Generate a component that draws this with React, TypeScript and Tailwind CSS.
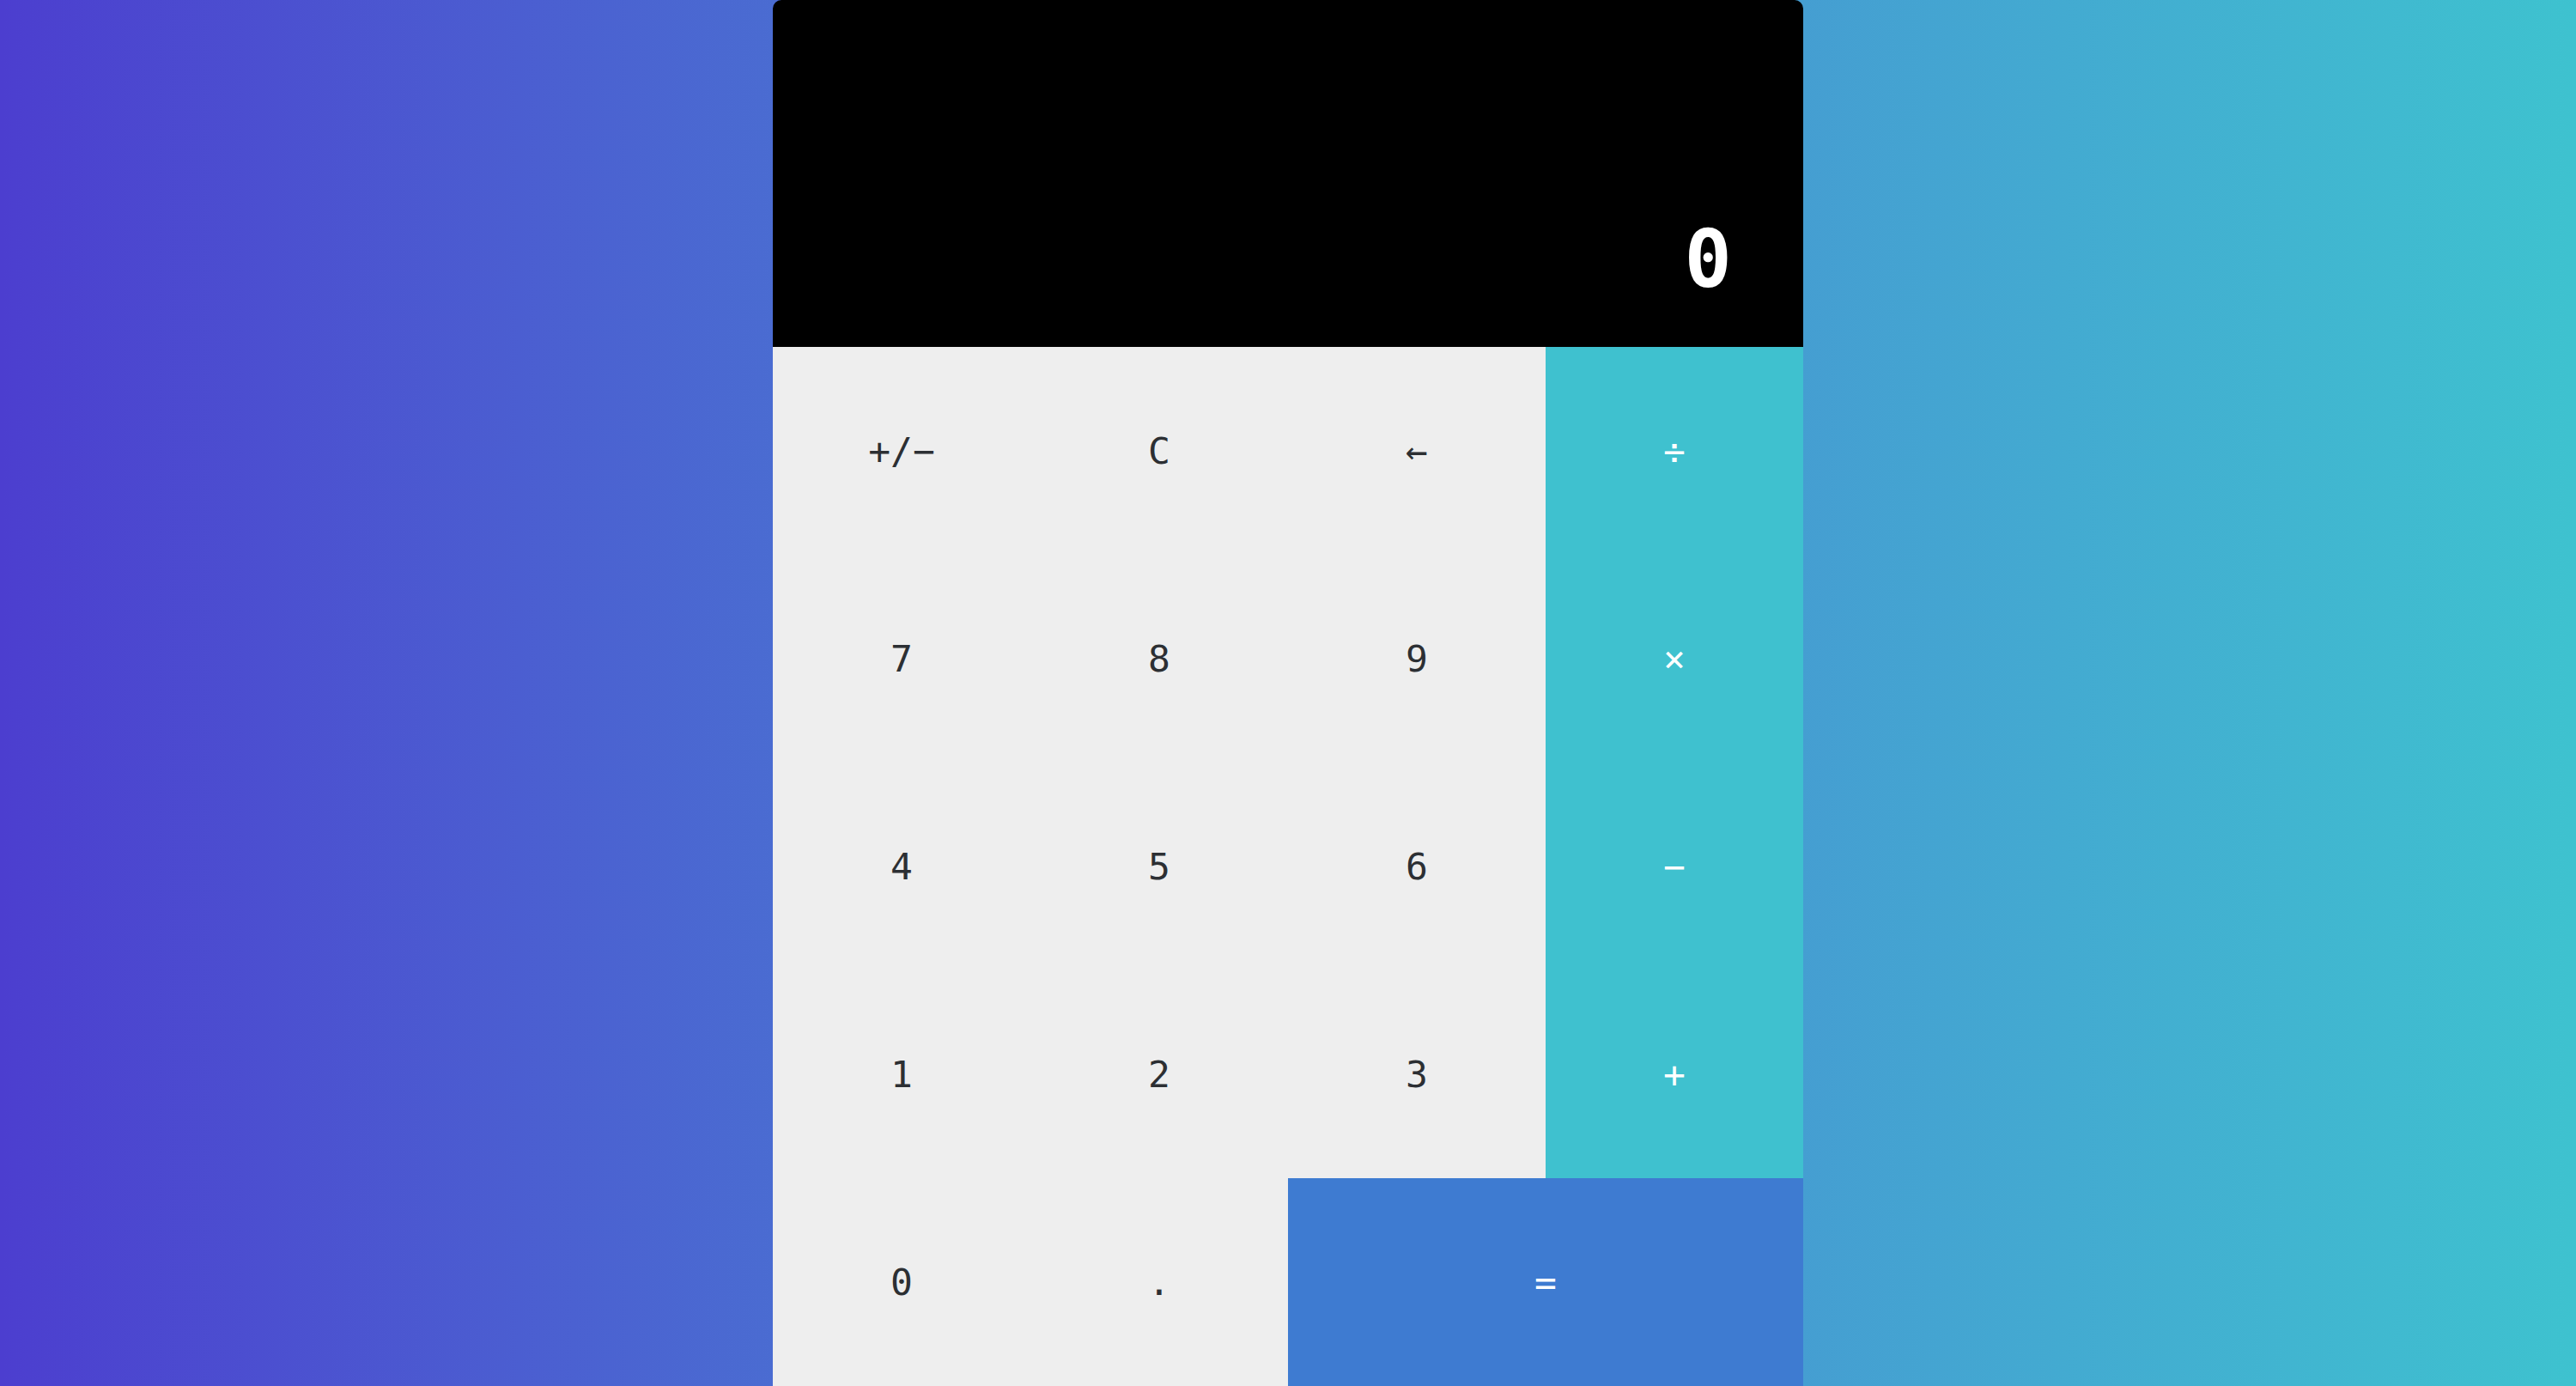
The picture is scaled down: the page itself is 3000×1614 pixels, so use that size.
import React from 'react'

type Key = {
  label: string
  kind: 'num' | 'op' | 'eq'
  wide?: boolean
}

const keys: Key[] = [
  { label: '+/−', kind: 'num' },
  { label: 'C', kind: 'num' },
  { label: '←', kind: 'num' },
  { label: '÷', kind: 'op' },
  { label: '7', kind: 'num' },
  { label: '8', kind: 'num' },
  { label: '9', kind: 'num' },
  { label: '×', kind: 'op' },
  { label: '4', kind: 'num' },
  { label: '5', kind: 'num' },
  { label: '6', kind: 'num' },
  { label: '−', kind: 'op' },
  { label: '1', kind: 'num' },
  { label: '2', kind: 'num' },
  { label: '3', kind: 'num' },
  { label: '+', kind: 'op' },
  { label: '0', kind: 'num' },
  { label: '.', kind: 'num' },
  { label: '=', kind: 'eq', wide: true },
]

const keyStyles = {
  num: 'bg-[#eeeeee] text-[#2c2f33]',
  op: 'bg-[#3fc1cf] text-white',
  eq: 'bg-[#3e7bd1] text-white',
}

const App = () => {
  return (
    <div
      className="min-h-screen w-full flex justify-center bg-gradient-to-r from-[#4c3ecf] to-[#3ec2cf]"
      style={{ fontFamily: '"DejaVu Sans Mono", "Liberation Mono", monospace' }}
    >
      <div className="w-[1200px] h-[1614px] flex flex-col rounded-t-[10px] overflow-hidden">
        {/* display */}
        <div className="h-[404px] bg-black flex items-end justify-end pr-[83px] pb-[55px]">
          <span className="text-white font-bold text-[92px] leading-none">0</span>
        </div>

        {/* keypad */}
        <div className="grid grid-cols-4 auto-rows-[242px] flex-1">
          {keys.map((k) => (
            <button
              key={k.label}
              className={`flex items-center justify-center text-[43px] leading-none ${keyStyles[k.kind]} ${
                k.wide ? 'col-span-2' : ''
              }`}
            >
              {k.label}
            </button>
          ))}
        </div>
      </div>
    </div>
  )
}

export default App
